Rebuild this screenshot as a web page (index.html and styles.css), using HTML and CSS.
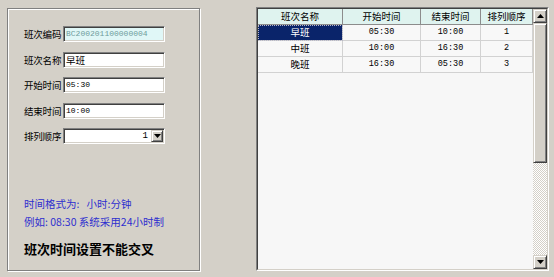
FILE: index.html
```html
<!DOCTYPE html>
<html lang="zh">
<head>
<meta charset="utf-8">
<title>班次设置</title>
<link rel="stylesheet" href="styles.css">
</head>
<body>
<div class="app">
  <div class="group">
    <div class="form">
      <div class="row"><span class="lbl">班次编码</span><div class="field ro">BC200201100000004</div></div>
      <div class="row"><span class="lbl">班次名称</span><div class="field cjk">早班</div></div>
      <div class="row"><span class="lbl">开始时间</span><div class="field">05:30</div></div>
      <div class="row"><span class="lbl">结束时间</span><div class="field">10:00</div></div>
      <div class="row"><span class="lbl">排列顺序</span><div class="field combo"><span class="cval">1</span><span class="cbtn"><svg width="7" height="4" viewBox="0 0 7 4"><path d="M0 0h7L3.5 4z" fill="#000"/></svg></span></div></div>
    </div>
    <p class="note first">时间格式为:&nbsp;&nbsp; 小时:分钟</p>
    <p class="note">例如: 08:30 系统采用24小时制</p>
    <p class="warn">班次时间设置不能交叉</p>
  </div>
  <div class="grid">
    <div class="grid-inner">
      <div class="table-area">
        <table class="tbl">
          <colgroup><col class="c1"><col class="c2"><col class="c3"><col class="c4"></colgroup>
          <thead>
            <tr><th>班次名称</th><th>开始时间</th><th>结束时间</th><th>排列顺序</th></tr>
          </thead>
          <tbody>
            <tr><td class="sel">早班</td><td class="num">05:30</td><td class="num">10:00</td><td class="num">1</td></tr>
            <tr><td>中班</td><td class="num">10:00</td><td class="num">16:30</td><td class="num">2</td></tr>
            <tr><td>晚班</td><td class="num">16:30</td><td class="num">05:30</td><td class="num">3</td></tr>
          </tbody>
        </table>
      </div>
      <div class="vscroll">
        <div class="sbtn"><svg width="7" height="4" viewBox="0 0 7 4"><path d="M3.5 0L7 4H0z" fill="#000"/></svg></div>
        <div class="thumb"></div>
        <div class="track"></div>
        <div class="sbtn"><svg width="7" height="4" viewBox="0 0 7 4"><path d="M0 0h7L3.5 4z" fill="#000"/></svg></div>
      </div>
    </div>
  </div>
</div>
</body>
</html>
```

FILE: styles.css
```css
html, body {
  margin: 0;
  padding: 0;
}
body {
  background: #d4d0c8;
  font-family: "Noto Sans CJK SC", "Noto Sans", sans-serif;
  color: #000;
  width: 554px;
  height: 277px;
  overflow: hidden;
}
.app {
  display: flex;
  align-items: flex-start;
  gap: 56px;
  padding: 8px 5px 0 7px;
  height: 277px;
  box-sizing: border-box;
}
.group {
  width: 193px;
  height: 263px;
  box-sizing: border-box;
  border: 1px solid #808080;
  box-shadow: inset 1px 1px 0 #fff, 1px 1px 0 #fff;
  padding: 17px 0 0 16px;
  display: flex;
  flex-direction: column;
}
.form {
  display: flex;
  flex-direction: column;
  gap: 9.5px;
}
.row {
  display: flex;
  align-items: center;
  height: 16px;
}
.lbl {
  width: 39px;
  font-size: 9.5px;
  line-height: 16px;
  white-space: nowrap;
  letter-spacing: -0.2px;
}
.field {
  width: 102px;
  height: 16px;
  box-sizing: border-box;
  border: 1px solid;
  border-color: #808080 #fff #fff #808080;
  box-shadow: inset 1px 1px 0 #404040, inset -1px -1px 0 #d4d0c8;
  background: #fff;
  font-family: "Liberation Mono", "DejaVu Sans Mono", monospace;
  font-size: 8px;
  line-height: 14px;
  padding-left: 2px;
  white-space: nowrap;
  overflow: hidden;
}
.field.cjk {
  font-family: "Noto Sans CJK SC", sans-serif;
  font-size: 9.5px;
}
.field.ro {
  background: #e0f7f7;
  color: #6f9c9c;
}
.combo {
  display: flex;
  justify-content: flex-end;
  align-items: center;
  padding: 0 1px 0 0;
}
.cval {
  font-size: 9px;
  margin-right: 3px;
}
.cbtn {
  width: 12px;
  height: 12px;
  box-sizing: border-box;
  background: #d4d0c8;
  border: 1px solid;
  border-color: #d4d0c8 #404040 #404040 #d4d0c8;
  box-shadow: inset 1px 1px 0 #fff, inset -1px -1px 0 #808080;
  display: flex;
  align-items: center;
  justify-content: center;
}
.note {
  margin: 0;
  font-size: 10.5px;
  line-height: 18px;
  color: #2e2ecf;
  white-space: nowrap;
}
.note.first {
  margin-top: 51px;
}
.warn {
  margin: 8px 0 0;
  font-size: 13px;
  font-weight: bold;
  line-height: 20px;
  white-space: nowrap;
}
.grid {
  width: 293px;
  height: 264px;
  margin-top: -1px;
  box-sizing: border-box;
  border: 1px solid;
  border-color: #808080 #fff #fff #808080;
}
.grid-inner {
  height: 100%;
  box-sizing: border-box;
  border: 1px solid;
  border-color: #404040 #d4d0c8 #d4d0c8 #404040;
  background: #f7f7f7;
  display: flex;
}
.table-area {
  width: 275px;
  overflow: hidden;
}
.tbl {
  width: 275px;
  table-layout: fixed;
  border-collapse: separate;
  border-spacing: 0;
}
.c1 { width: 85px; }
.c2 { width: 78px; }
.c3 { width: 60px; }
.c4 { width: 52px; }
.tbl th, .tbl td {
  padding: 0;
  height: 15px;
  line-height: 15px;
  text-align: center;
  font-size: 9.5px;
  font-weight: normal;
  white-space: nowrap;
  overflow: hidden;
}
.tbl th {
  background: #dff3ef;
  border-right: 1px solid #8c8c8c;
  border-bottom: 1px solid #8c8c8c;
}
.tbl td {
  background: #f8f8f8;
  border-right: 1px solid #d2d2d2;
  border-bottom: 1px solid #d2d2d2;
}
.tbl td.num {
  font-family: "Liberation Mono", "DejaVu Sans Mono", monospace;
  font-size: 8.5px;
}
.tbl td.sel {
  background: #0a246a;
  color: #fff;
  outline: 1px dotted #b8b8c8;
  outline-offset: -1px;
}
.vscroll {
  width: 14px;
  display: flex;
  flex-direction: column;
}
.sbtn {
  height: 14px;
  box-sizing: border-box;
  background: #d4d0c8;
  border: 1px solid;
  border-color: #d4d0c8 #404040 #404040 #d4d0c8;
  box-shadow: inset 1px 1px 0 #fff, inset -1px -1px 0 #808080;
  display: flex;
  align-items: center;
  justify-content: center;
}
.thumb {
  height: 140px;
  box-sizing: border-box;
  background: #d4d0c8;
  border: 1px solid;
  border-color: #d4d0c8 #404040 #404040 #d4d0c8;
  box-shadow: inset 1px 1px 0 #fff, inset -1px -1px 0 #808080;
}
.track {
  flex: 1;
  background: repeating-conic-gradient(#ffffff 0 25%, #d4d0c8 0 50%) 0 0 / 2px 2px;
}
```
